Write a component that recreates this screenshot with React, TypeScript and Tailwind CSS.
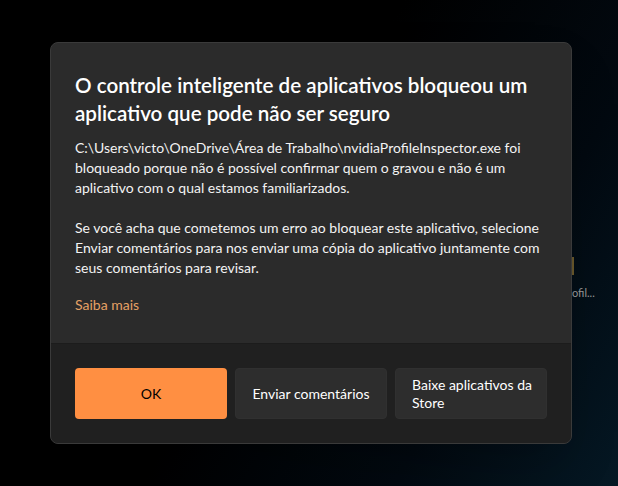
import React from "react";

const font = { fontFamily: 'Lato, "Noto Sans", sans-serif' };

export default function App() {
    return (
        <div
            className="relative h-[486px] w-full overflow-hidden bg-[linear-gradient(120deg,#000000_0%,#000000_45%,#020910_75%,#051824_100%)]"
            style={font}
        >
            {/* Window peeking out behind the dialog */}
            <div className="absolute left-[572px] top-[257px] h-[18px] w-[2px] bg-[#6b5a2c]" />
            <div className="absolute left-[572px] top-[285px] text-[11px] text-[#9c9c9c]">
                ofil...
            </div>

            <div className="relative z-10 flex pl-[50px] pt-[42px]">
                <div className="w-[522px] overflow-hidden rounded-lg border border-[#3a3a3a] bg-[#2b2b2b] shadow-2xl">
                    {/* Body */}
                    <div className="whitespace-nowrap px-6 pb-[28px] pt-[28px]">
                        <h1 className="text-[20.6px] font-semibold leading-[28px] text-white">
                            O controle inteligente de aplicativos bloqueou um
                            <br />
                            aplicativo que pode não ser seguro
                        </h1>
                        <div className="mt-[11px] text-[14px] leading-[20px] text-[#f3f3f3]">
                            <p>
                                C:\Users\victo\OneDrive\Área de Trabalho\nvidiaProfileInspector.exe foi
                                <br />
                                bloqueado porque não é possível confirmar quem o gravou e não é um
                                <br />
                                aplicativo com o qual estamos familiarizados.
                            </p>
                            <p className="mt-5">
                                Se você acha que cometemos um erro ao bloquear este aplicativo, selecione
                                <br />
                                Enviar comentários para nos enviar uma cópia do aplicativo juntamente com
                                <br />
                                seus comentários para revisar.
                            </p>
                        </div>
                        <a className="mt-[17px] block text-[14px] leading-[20px] text-[#e6a165]">
                            Saiba mais
                        </a>
                    </div>

                    {/* Footer */}
                    <div className="grid grid-cols-3 gap-2 border-t border-[#1c1c1c] bg-[#202020] px-6 py-6">
                        <button className="flex h-[51px] items-center justify-center rounded-[4px] bg-[#ff8f42] text-[14px] text-black">
                            OK
                        </button>
                        <button className="flex h-[51px] items-center justify-center whitespace-nowrap rounded-[4px] border border-[#303030] bg-[#2d2d2d] text-[14px] text-white">
                            Enviar comentários
                        </button>
                        <button className="h-[51px] whitespace-nowrap rounded-[4px] border border-[#303030] bg-[#2d2d2d] px-4 text-left text-[14px] leading-[18px] text-white">
                            Baixe aplicativos da
                            <br />
                            Store
                        </button>
                    </div>
                </div>
            </div>
        </div>
    );
}
